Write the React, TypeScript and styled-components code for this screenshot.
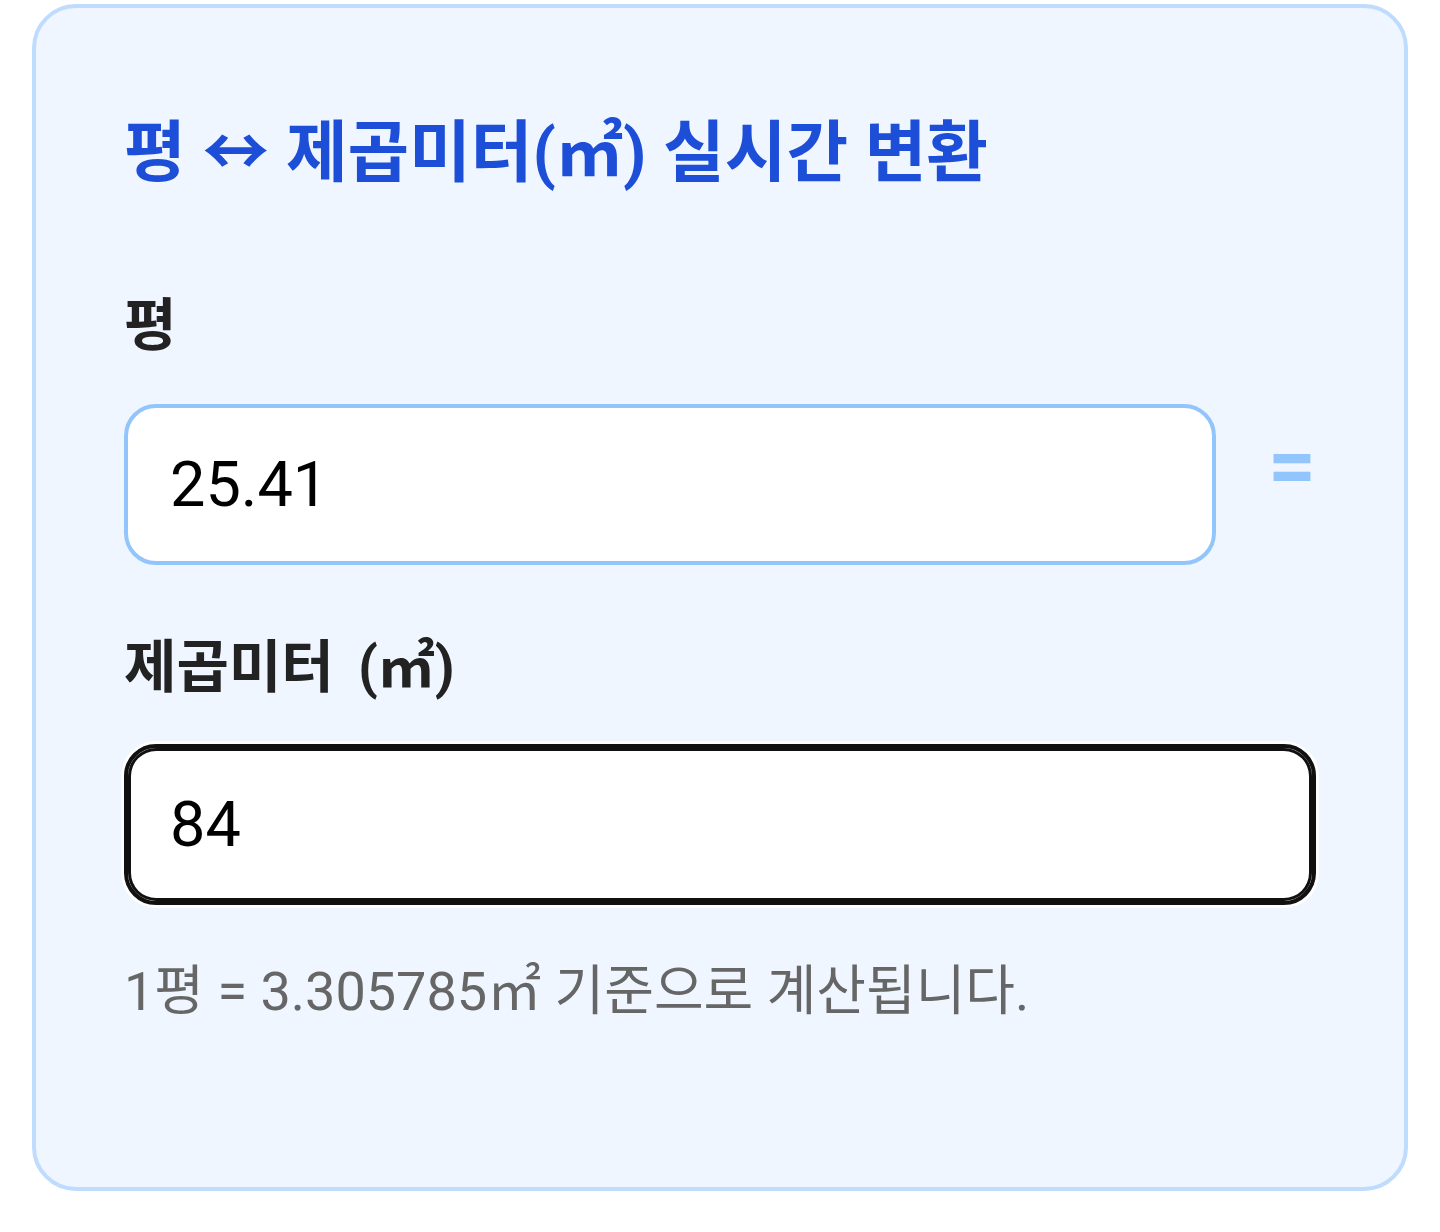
import React from "react";
import styled, { createGlobalStyle } from "styled-components";

const Global = createGlobalStyle`
  html, body { margin: 0; padding: 0; background: #ffffff; }
  body { font-family: Roboto, "Noto Sans CJK KR", sans-serif; }
  * { box-sizing: border-box; }
`;

const Page = styled.div`
  padding: 4px 32px 0 32px;
`;

const Card = styled.section`
  width: 1376px;
  height: 1187px;
  background: #eff6ff;
  border: 4px solid #bfdbfe;
  border-radius: 44px;
  padding: 105px 88px 0 88px;
  display: flex;
  flex-direction: column;
`;

const Title = styled.h2`
  margin: 0 0 98px 0;
  font-family: Roboto, "Noto Sans CJK KR", sans-serif;
  font-size: 67px;
  font-weight: 700;
  line-height: 80px;
  color: #1d4ed8;
  white-space: nowrap;
`;

const Label = styled.label<{ $gap: number }>`
  display: block;
  font-family: Roboto, "Noto Sans CJK KR", sans-serif;
  font-size: 57px;
  font-weight: 700;
  line-height: 70px;
  color: #222222;
  white-space: nowrap;
  margin: 0 0 ${(p) => p.$gap}px 0;
`;

const Unit = styled.span`
  margin-left: 10px;
`;

const Row = styled.div`
  display: flex;
  align-items: center;
  gap: 52px;
  margin-bottom: 68px;
`;

const Field = styled.input<{ $active?: boolean }>`
  flex: none;
  width: 100%;
  min-width: 0;
  height: 161px;
  border-radius: 32px;
  border: 4px solid ${(p) => (p.$active ? "#111111" : "#93c5fd")};
  box-shadow: ${(p) =>
    p.$active ? "inset 0 0 0 3px #111111, 0 0 0 3px #ffffff" : "none"};
  background: #ffffff;
  padding: 0 0 0 42px;
  font-family: Roboto, "Noto Sans CJK KR", sans-serif;
  font-size: 63px;
  color: #000000;
  outline: none;
`;

const RowField = styled(Field)`
  flex: 1 1 auto;
  width: auto;
`;

const Equals = styled.span`
  width: 48px;
  margin-bottom: 38px;
  font-family: Roboto, sans-serif;
  font-size: 84px;
  font-weight: 700;
  line-height: 1;
  color: #93c5fd;
`;

const Note = styled.p`
  margin: 52px 0 0 0;
  font-family: Roboto, "Noto Sans CJK KR", sans-serif;
  font-size: 54px;
  line-height: 70px;
  color: #666666;
  white-space: nowrap;
`;

export default function App() {
  return (
    <Page>
      <Global />
      <Card>
        <Title>평 ↔ 제곱미터(㎡) 실시간 변환</Title>
        <Label $gap={43}>평</Label>
        <Row>
          <RowField defaultValue="25.41" readOnly />
          <Equals>=</Equals>
        </Row>
        <Label $gap={41}>
          제곱미터 <Unit>(㎡)</Unit>
        </Label>
        <Field $active defaultValue="84" readOnly />
        <Note>1평 = 3.305785㎡ 기준으로 계산됩니다.</Note>
      </Card>
    </Page>
  );
}
